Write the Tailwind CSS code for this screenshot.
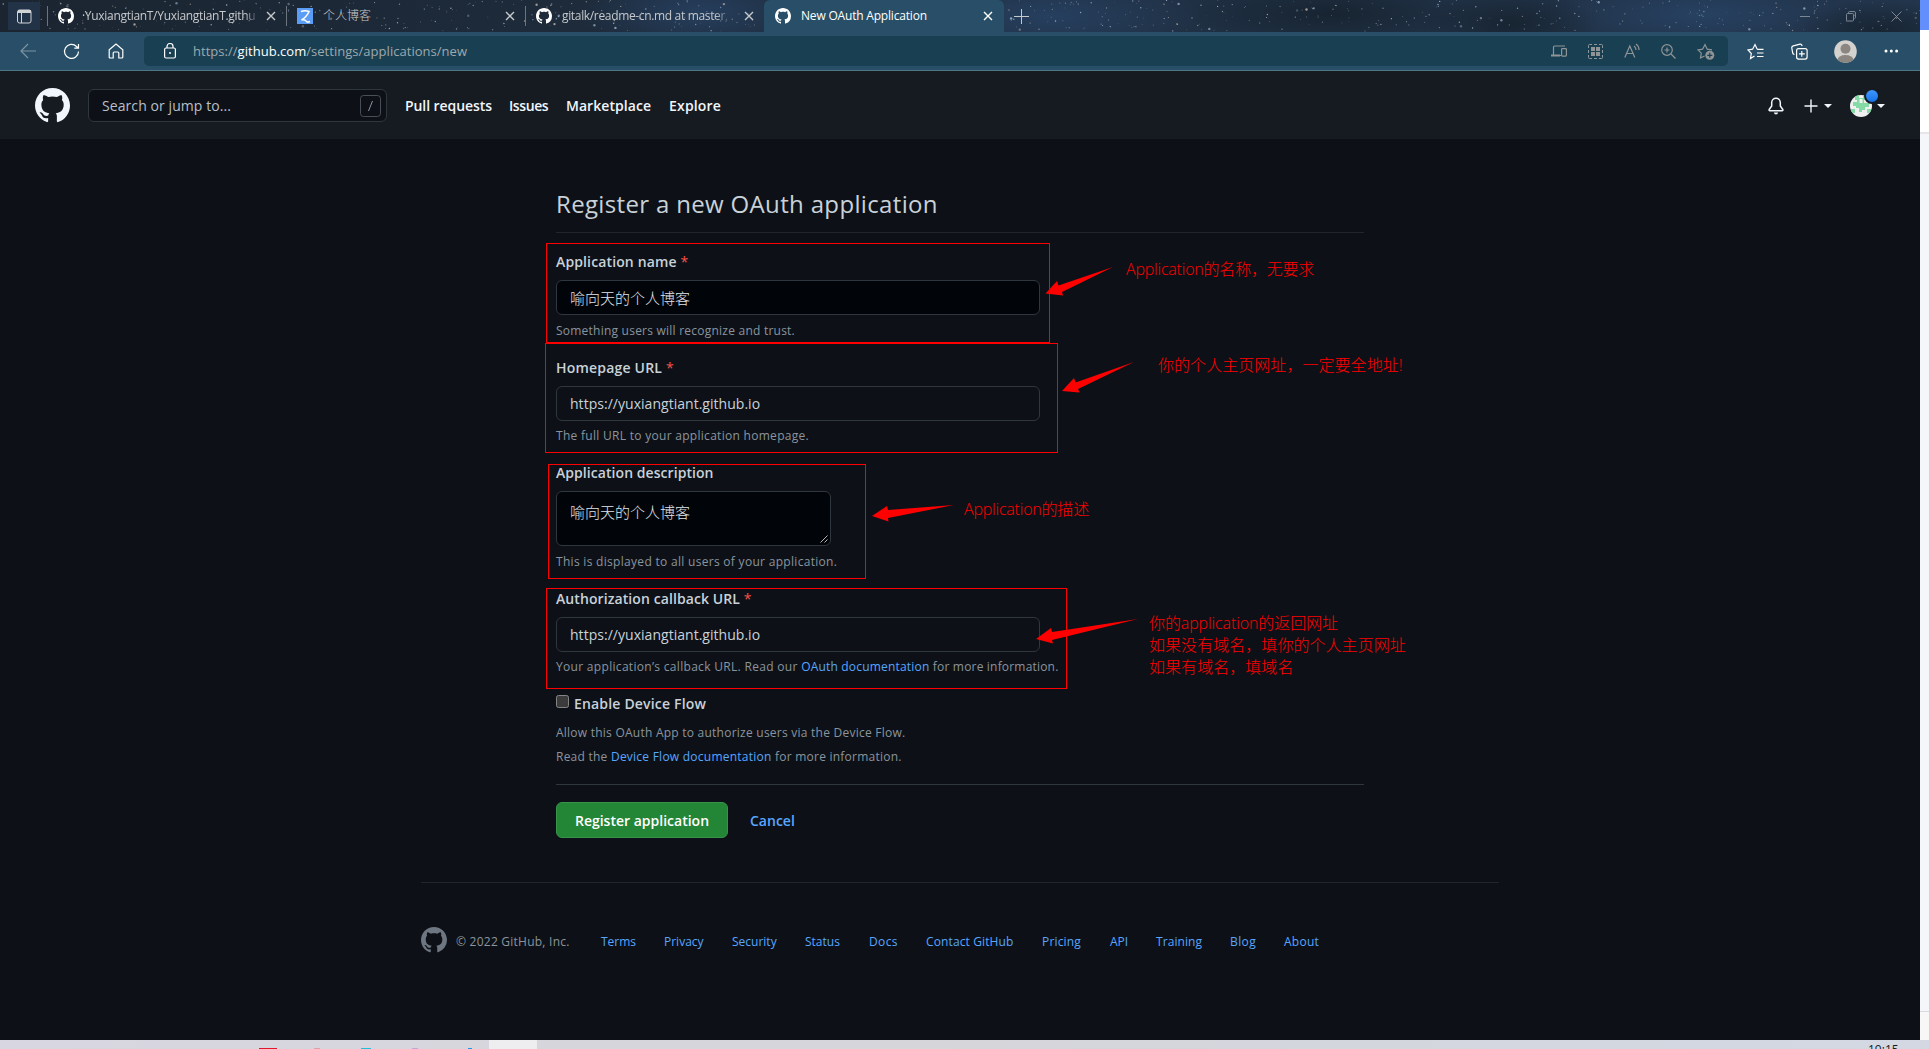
<!DOCTYPE html>
<html lang="en">
<head>
<meta charset="utf-8">
<title>New OAuth Application</title>
<script src="https://cdn.jsdelivr.net/npm/@tailwindcss/browser@4"></script>
</head>
<body class="w-[1929px] h-[1049px] overflow-hidden bg-white font-['Open_Sans','Noto_Sans_CJK_SC',sans-serif] text-[14px] text-[#c9d1d9]">
<svg class="hidden">
  <symbol id="mark" viewBox="0 0 16 16"><path fill="currentColor" d="M8 0C3.58 0 0 3.58 0 8c0 3.54 2.29 6.53 5.47 7.59.4.07.55-.17.55-.38 0-.19-.01-.82-.01-1.49-2.01.37-2.53-.49-2.69-.94-.09-.23-.48-.94-.82-1.13-.28-.15-.68-.52-.01-.53.63-.01 1.08.58 1.23.82.72 1.21 1.87.87 2.33.66.07-.52.28-.87.51-1.07-1.78-.2-3.64-.89-3.64-3.95 0-.87.31-1.59.82-2.15-.08-.2-.36-1.02.08-2.12 0 0 .67-.21 2.2.82.64-.18 1.32-.27 2-.27s1.36.09 2 .27c1.53-1.04 2.2-.82 2.2-.82.44 1.1.16 1.92.08 2.12.51.56.82 1.27.82 2.15 0 3.07-1.87 3.75-3.65 3.95.29.25.54.73.54 1.48 0 1.07-.01 1.93-.01 2.2 0 .21.15.46.55.38A8.01 8.01 0 0 0 16 8c0-4.42-3.58-8-8-8z"/></symbol>
  <symbol id="x" viewBox="0 0 10 10"><path d="M1 1l8 8M9 1l-8 8" stroke="currentColor" stroke-width="1.4" fill="none"/></symbol>
</svg>
<div class="relative flex h-[1049px] w-[1929px] flex-col">
 <div class="flex h-[1040px]">
  <div class="flex w-[1920px] flex-col bg-[#0d1117]">

   <!-- tab strip -->
   <div class="relative h-8 bg-linear-to-r from-[#1b2531] via-[#1f2f42] to-[#22354c]">
    <svg id="sky" class="absolute inset-0" width="1920" height="32">
     <defs>
      <radialGradient id="neb"><stop offset="0" stop-color="#2b4a72" stop-opacity=".6"/><stop offset="1" stop-color="#2b4a72" stop-opacity="0"/></radialGradient>
      <radialGradient id="dk"><stop offset="0" stop-color="#15202b" stop-opacity=".8"/><stop offset="1" stop-color="#15202b" stop-opacity="0"/></radialGradient>
     </defs>
     <ellipse cx="700" cy="12" rx="120" ry="40" fill="url(#neb)"/><ellipse cx="1050" cy="16" rx="150" ry="40" fill="url(#neb)"/><ellipse cx="1700" cy="14" rx="150" ry="34" fill="url(#neb)"/><ellipse cx="1330" cy="14" rx="150" ry="34" fill="url(#dk)"/><ellipse cx="1510" cy="24" rx="90" ry="34" fill="url(#dk)"/><ellipse cx="1880" cy="30" rx="90" ry="30" fill="url(#dk)"/>
     <g id="stars"></g>
    </svg>
    <div class="relative flex h-8 items-center text-[12px] text-[#c6c9cc]">
     <div class="ml-2 flex h-7 w-8 items-center justify-center bg-[#223247]">
      <svg width="15" height="15" viewBox="0 0 15 15" fill="none" stroke="#d0d3d6"><rect x=".5" y="1" width="13.5" height="13" rx="2"/><path d="M1 2.5h13" stroke-width="3"/><path d="M4.5 4v10"/></svg>
     </div>
     <div class="ml-[7px] h-5 w-px bg-[#6b7580]"></div>
     <svg class="ml-[10px] size-4 text-white"><use href="#mark"/></svg>
     <div class="ml-2 w-[177px] overflow-hidden whitespace-nowrap tracking-[-0.3px] mask-r-from-92%">·YuxiangtianT/YuxiangtianT.githu</div>
     <svg class="ml-[7px] size-[10px]"><use href="#x"/></svg>
     <div class="ml-[10px] h-5 w-px bg-[#6b7580]"></div>
     <svg class="ml-[10px] size-4" viewBox="0 0 16 16" fill="none"><path fill="#5b9df5" d="M0 0h16v16H0z"/><path d="M4 3.500q4-1.500 8 0q-2 5-7.500 8.500q3.500-1 4.500 1t4 .5" stroke="#fff" stroke-width="1.500"/></svg>
     <div class="ml-[10px] w-[182px] text-[12px] font-light">个人博客</div>
     <svg class="ml-0 size-[10px]"><use href="#x"/></svg>
     <div class="ml-[10px] h-5 w-px bg-[#6b7580]"></div>
     <svg class="ml-[10px] size-4 text-white"><use href="#mark"/></svg>
     <div class="ml-[10px] w-[170px] overflow-hidden whitespace-nowrap tracking-[-0.34px] mask-r-from-90%">gitalk/readme-cn.md at master,</div>
     <svg class="ml-[12px] size-[10px]"><use href="#x"/></svg>
     <div class="ml-[10px] flex h-8 w-[240px] items-center rounded-t-[6px] bg-[#284f67] pl-[11px] text-white">
      <svg class="size-4 text-white"><use href="#mark"/></svg>
      <div class="ml-[10px] w-[182px] whitespace-nowrap tracking-[-0.19px]">New OAuth Application</div>
      <svg class="size-[10px]"><use href="#x"/></svg>
     </div>
     <svg class="ml-[10px]" width="15" height="15" viewBox="0 0 15 15" stroke="#c6c9cc"><path d="M0 7.500h15M7.500 0v15"/></svg>
     <div class="ml-auto flex w-[120px] items-center justify-between pr-[18px] text-[#7b8794]">
      <svg width="10" height="10" stroke="currentColor"><path d="M0 5.500h10"/></svg>
      <svg width="10" height="11" fill="none" stroke="currentColor"><rect x=".5" y="2.500" width="7" height="7.500" rx="1"/><path d="M2.500 2V1.500q0-1 1-1h4.500q1.500 0 1.500 1.500v4.500q0 1-1 1"/></svg>
      <svg width="11" height="11" stroke="currentColor"><path d="M.5.5l10 10M10.500.5l-10 10"/></svg>
     </div>
    </div>
   </div>

   <!-- toolbar -->
   <div class="flex h-[39px] items-center border-b border-[#4d7784] bg-[#284f67] text-white">
    <svg class="ml-5 text-[#7d94a2]" width="16" height="16" viewBox="0 0 16 16" fill="none" stroke="currentColor" stroke-width="1.200"><path d="M16 8H1M8 1L1 8l7 7"/></svg>
    <svg class="ml-[27px]" width="17" height="17" viewBox="0 0 17 17" fill="none" stroke="currentColor" stroke-width="1.200"><path d="M15.500 8.500a7 7 0 1 1-2-5L15.500 5M15.500 1v4.200h-4.200"/></svg>
    <svg class="ml-7" width="16" height="16" viewBox="0 0 16 16" fill="none" stroke="currentColor" stroke-width="1.200"><path d="M1.200 6.800L8 1l6.800 5.800v7.200q0 1-1 1h-3V10q0-1-1-1H6.200q-1 0-1 1v5h-3q-1 0-1-1z"/></svg>
    <div class="ml-5 flex h-[30px] w-[1584px] items-center rounded-[5px] bg-[#193f53] pl-5 pr-[13px]">
     <svg width="12" height="16" viewBox="0 0 12 16" fill="none" stroke="currentColor" stroke-width="1.200"><rect x=".6" y="5" width="10.800" height="10" rx="1.500"/><path d="M3 5V3.500a3 3 0 0 1 6 0V5"/><circle cx="6" cy="10" r="1" fill="currentColor" stroke="none"/></svg>
     <div class="ml-[17px] whitespace-nowrap pt-px text-[13px] tracking-[0.03px] text-[#9fa9ac]">https://<span class="text-white">github.com</span>/settings/applications/new</div>
     <div class="ml-auto flex items-center gap-[21px] text-[#8f9496]">
      <svg width="16" height="16" viewBox="0 0 16 16" fill="none" stroke="currentColor" stroke-width="1.200"><path d="M2.500 12V4q0-1 1-1H14M0 12.500h10" /><path d="M0 12.500h9" stroke-width="2"/><rect x="10.600" y="5.600" width="4.800" height="7.500" rx=".8"/></svg>
      <svg width="15" height="15" viewBox="0 0 15 15" fill="none" stroke="currentColor"><path d="M.5 4V1.500q0-1 1-1H4M6 .5h3M6 14.500h3M.5 6v3M14.500 6v3M11 .5h2.500q1 0 1 1V4M14.500 11v2.500q0 1-1 1H11M4 14.500H1.500q-1 0-1-1V11"/><path d="M3 3h4v4H3zM8 3h4v4H8zM3 8h4v4H3zM8 8h4v4H8z" fill="currentColor" stroke="none"/></svg>
      <svg width="16" height="16" viewBox="0 0 16 16" fill="none" stroke="currentColor" stroke-width="1.200"><path d="M.8 14.500L5.800 3l5 11.500M2.500 10.500h6.600M10 3q2 1.500 2 4M12 1q3 2 3 6"/></svg>
      <svg width="15" height="15" viewBox="0 0 15 15" fill="none" stroke="currentColor" stroke-width="1.200"><circle cx="6" cy="6" r="5.300"/><path d="M10 10l4.500 4.500M3.500 6h5M6 3.500v5"/></svg>
      <svg width="18" height="17" viewBox="0 0 18 17" fill="none" stroke="currentColor" stroke-width="1.200"><path d="M7.500 13L3.500 15l.8-4.800L1 6.900l4.600-.7L8 1.500l2.200 4.700 4.800.7"/><circle cx="12.800" cy="12.300" r="4.500" fill="currentColor" stroke="none"/><path d="M12.800 9.800v5M10.300 12.300h5" stroke="#193f53"/></svg>
     </div>
    </div>
    <svg class="ml-[19px]" width="17" height="17" viewBox="0 0 17 17" fill="none" stroke="currentColor" stroke-width="1.200"><path d="M7.500 13L3.500 15.500l.8-5L1 6.900l4.600-.7L8 1.500l2.200 4.700M10.200 6.300h6.300M10 10h6.500M10 13.500h6.500"/></svg>
    <svg class="ml-[27px]" width="17" height="17" viewBox="0 0 17 17" fill="none" stroke="currentColor" stroke-width="1.200"><rect x="5.600" y="5.600" width="10.500" height="10.500" rx="2"/><path d="M10.800 8v5.800M8 10.800h5.800M3.500 11.500q-1.500-.4-1.800-1.500L.8 5Q.6 3.200 2.300 2.800L9 1.200q1.500-.3 2.200 1.800"/></svg>
    <svg class="ml-[26px]" width="23" height="23" viewBox="0 0 23 23"><clipPath id="c"><circle cx="11.500" cy="11.500" r="11.300"/></clipPath><g clip-path="url(#c)"><path fill="#d4d2ce" d="M0 0h23v23H0z"/><circle cx="11.500" cy="8.700" r="5" fill="#8b8680"/><ellipse cx="11.500" cy="20" rx="8" ry="5" fill="#8b8680"/></g></svg>
    <svg class="ml-[27px]" width="15" height="4" fill="currentColor"><circle cx="2" cy="2" r="1.500"/><circle cx="7.300" cy="2" r="1.500"/><circle cx="12.600" cy="2" r="1.500"/></svg>
   </div>

   <!-- site header -->
   <div class="flex h-[68px] items-center bg-[#161b22] pl-[35px] pt-[1px] font-semibold text-[#f0f6fc]">
    <svg class="size-[35px]"><use href="#mark"/></svg>
    <div class="ml-[18px] flex h-[33px] w-[299px] items-center justify-between rounded-md border border-[#30363d] bg-[#0d1117] pl-[13px] pr-[5px] font-normal text-[#b9bfc6]"><span class="tracking-[0.08px]">Search or jump to...</span>
     <svg width="21" height="22" fill="none"><rect x=".5" y=".5" width="20" height="21" rx="3" stroke="#484f58"/><path d="M12.500 6L8.500 16" stroke="#8b949e"/></svg></div>
    <div class="ml-[18px] flex whitespace-nowrap"><span class="w-[104px] tracking-[-0.07px]">Pull requests</span><span class="w-[57px] tracking-[-0.4px]">Issues</span><span class="w-[103px] tracking-[0.05px]">Marketplace</span><span class="tracking-[0.18px]">Explore</span></div>
    <div class="ml-auto flex items-center pr-[35px]">
     <svg width="16" height="18" viewBox="0 0 16 18" fill="none" stroke="currentColor" stroke-width="1.500"><path d="M8 1.200A4.300 4.300 0 0 0 3.700 5.500V9L1.200 12.500q-.5 1 .5 1.200h12.600q1-.2.5-1.200L12.300 9V5.500A4.300 4.300 0 0 0 8 1.200z"/><path d="M5.800 15.500h4.400q-.5 2-2.200 2t-2.200-2z" fill="currentColor" stroke="none"/></svg>
     <svg class="ml-5" width="14" height="14" stroke="currentColor" stroke-width="1.400"><path d="M0.500 7h13M7 .5v13"/></svg>
     <svg class="ml-[6px]" width="8" height="4" fill="currentColor"><path d="M0 0h8L4 4z"/></svg>
     <div class="relative ml-[18px]">
      <svg width="22" height="22" viewBox="0 0 22 22"><clipPath id="a"><circle cx="11" cy="11" r="11"/></clipPath><g clip-path="url(#a)"><path fill="#f0f0f0" d="M0 0h22v22H0z"/><path fill="#84dba5" d="M5 0h4v3h4V0h4v5h-3v3h5v4h-4v3h-3v2H9v-4H6v-2H3V7h4V5H5zM1 14h4v4H1zM17 14h4v4h-4z"/><path fill="#f0f0f0" d="M9.500 4v4h3V4z"/></g></svg>
      <div class="absolute -top-[7px] left-[14px] size-[16px] rounded-full border-2 border-[#161b22] bg-linear-to-b from-[#3f96ff] to-[#1273ea]"></div>
     </div>
     <svg class="ml-[5px]" width="8" height="4" fill="currentColor"><path d="M0 0h8L4 4z"/></svg>
    </div>
   </div>

   <!-- registration form -->
   <main class="ml-[556px] w-[808px] pt-[47px]">
    <h1 class="border-b border-[#21262d] pb-[10px] text-[24px] leading-9 tracking-[0.34px]">Register a new OAuth application</h1>
    <div class="mt-[19px]">
     <div class="font-semibold leading-5 tracking-[0.13px]">Application name <span class="font-normal text-[#f85149]">*</span></div>
     <div class="mt-2 flex h-[35px] w-[484px] items-center rounded-md border border-[#30363d] bg-[#010409] px-[13px] pt-px text-[15px] font-light text-[#e0e6ec]">喻向天的个人博客</div>
     <p class="mt-[7px] text-[12px] leading-[18px] tracking-[0.23px] text-[#8b949e]">Something users will recognize and trust.</p>
    </div>
    <div class="mt-[18px]">
     <div class="font-semibold leading-5 tracking-[0.2px]">Homepage URL <span class="font-normal text-[#f85149]">*</span></div>
     <div class="mt-2 flex h-[35px] w-[484px] items-center rounded-md border border-[#30363d] px-[13px] tracking-[0.03px]">https://yuxiangtiant.github.io</div>
     <p class="mt-[6px] text-[12px] leading-[18px] tracking-[0.29px] text-[#8b949e]">The full URL to your application homepage.</p>
    </div>
    <div class="mt-[18px]">
     <div class="font-semibold leading-5 tracking-[0.06px]">Application description</div>
     <div class="relative mt-2 h-[55px] w-[275px] rounded-md border border-[#30363d] bg-[#010409] px-[13px] pt-[9px] text-[15px] font-light leading-[22px] text-[#e0e6ec]">喻向天的个人博客
      <svg class="absolute bottom-[2px] right-[2px]" width="8" height="8" stroke="#b5b5b5"><path d="M0.500 7.500l7-7M4.500 7.500l3-3"/></svg></div>
     <p class="mt-[7px] text-[12px] leading-[18px] tracking-[0.3px] text-[#8b949e]">This is displayed to all users of your application.</p>
    </div>
    <div class="mt-[18px]">
     <div class="font-semibold leading-5 tracking-[0.09px]">Authorization callback URL <span class="font-normal text-[#f85149]">*</span></div>
     <div class="mt-2 flex h-[35px] w-[484px] items-center rounded-md border border-[#30363d] px-[13px] tracking-[0.03px]">https://yuxiangtiant.github.io</div>
     <p class="mt-[6px] text-[12px] leading-[18px] tracking-[0.19px] text-[#8b949e]"><span class="tracking-[0.31px]">Your application’s callback URL. Read our </span><span class="text-[#58a6ff]">OAuth documentation</span> for more information.</p>
    </div>
    <div class="mt-[18px] flex h-5">
     <div class="mt-[1px] size-[13px] rounded-[2.5px] border border-[#858585] bg-[#3b3b3b]"></div>
     <div class="ml-[5px] font-semibold leading-5 tracking-[0.18px]">Enable Device Flow</div>
    </div>
    <div class="mt-[7px] text-[12px] leading-6 tracking-[0.24px] text-[#8b949e]">
     <p>Allow this OAuth App to authorize users via the Device Flow.</p>
     <p>Read the <span class="text-[#58a6ff]">Device Flow documentation</span> for more information.</p>
    </div>
    <div class="mt-[15px] h-px bg-[#30363d]"></div>
    <div class="mt-[17px] flex h-9 items-center font-semibold">
     <div class="flex h-9 w-[172px] items-center justify-center rounded-md border border-[#389349] bg-[#238636] text-white">Register application</div>
     <span class="ml-[22px] text-[#58a6ff]">Cancel</span>
    </div>
   </main>

   <footer class="ml-[421px] mt-[44px] w-[1078px] border-t border-[#21262d] pt-[44px] text-[12px]">
    <div class="flex h-[26px] items-center whitespace-nowrap text-[#58a6ff]">
     <svg class="size-[26px] text-[#6e7681]"><use href="#mark"/></svg>
     <div class="flex pt-[3px]">
     <span class="ml-[9px] w-[145px] tracking-[0.24px] text-[#8b949e]">© 2022 GitHub, Inc.</span>
     <span class="w-[63px]">Terms</span><span class="w-[68px]">Privacy</span><span class="w-[73px]">Security</span><span class="w-[64px]">Status</span><span class="w-[57px] tracking-[0.4px]">Docs</span><span class="w-[116px] tracking-[0.12px]">Contact GitHub</span><span class="w-[68px] tracking-[0.18px]">Pricing</span><span class="w-[46px]">API</span><span class="w-[74px] tracking-[0.07px]">Training</span><span class="w-[54px] tracking-[0.4px]">Blog</span><span class="tracking-[0.27px]">About</span>
     </div>
    </div>
   </footer>
  </div>

  <!-- window behind the browser -->
  <div class="flex w-[9px] flex-col">
   <div class="h-[30px] bg-[#628ffb]"></div>
   <div class="h-[102px] bg-white"></div>
   <div class="h-[879px] border-t-2 border-[#e6e6e6] bg-[#f5f6fa]"></div>
   <div class="h-[29px] border-t border-[#d8dade] bg-[#f7f7f8]"></div>
  </div>
 </div>

 <!-- taskbar sliver -->
 <div class="relative h-[9px] overflow-hidden bg-linear-to-r from-[#d8d6e0] via-[#d5d5da] to-[#d3d8e3]">
  <svg class="absolute left-0 top-0" width="1929" height="9"><path fill="#eeeef0" d="M489 0h48v9h-48z"/><path fill="#e0182c" d="M259 8h18v1h-18z"/><path fill="#e0a0a8" d="M314 8h6v1h-6z"/><path fill="#25bfd8" d="M361 8h10v1h-10z"/><path fill="#c9a5d6" d="M412 8h6v1h-6z"/><path fill="#1e9be0" d="M468 8h4v1h-4z"/></svg>
  <div class="absolute left-[1868px] top-[2px] text-[12px] leading-4 text-[#1a1a1a]">19:15</div>
 </div>

 <!-- annotations laid over the page -->
 <div class="absolute left-[546px] top-[243px] h-[100px] w-[504px] border border-[#f00]"></div>
 <div class="absolute left-[545px] top-[343px] h-[110px] w-[513px] border border-[#f00]"></div>
 <div class="absolute left-[548px] top-[464px] h-[115px] w-[318px] border border-[#f00]"></div>
 <div class="absolute left-[546px] top-[588px] h-[101px] w-[521px] border border-[#f00]"></div>
 <svg class="absolute left-0 top-0" width="1929" height="1049" fill="#f00">
  <path d="M1045.500 293.500L1057 281l1.500 4.500L1113 267l-51 25 1 3.500z"/>
  <path d="M1062 391L1074 378l1.500 4.500L1134 362l-56 27 1.500 3.500z"/>
  <path d="M872 516L887 506l1 4L954 505l-66 13 .5 3.500z"/>
  <path d="M1036 639L1051 628l1 4L1138 619l-86 21 1 3.500z"/>
 </svg>
 <div class="absolute left-[1126px] top-[258px] whitespace-nowrap text-[16px] font-light leading-[22px] tracking-[-0.2px] text-[#f00]">Application的名称，无要求</div>
 <div class="absolute left-[1158px] top-[354px] whitespace-nowrap text-[16px] font-light leading-[22px] tracking-[0.05px] text-[#f00]">你的个人主页网址，一定要全地址!</div>
 <div class="absolute left-[964px] top-[498px] whitespace-nowrap text-[16px] font-light leading-[22px] tracking-[-0.2px] text-[#f00]">Application的描述</div>
 <div class="absolute left-[1149px] top-[612px] whitespace-nowrap text-[16px] font-light leading-[22px] tracking-[0.05px] text-[#f00]"><span class="tracking-[-0.1px]">你的application的返回网址</span><br>如果没有域名，填你的个人主页网址<br>如果有域名，填域名</div>
</div>
<script>
// scatter a fixed star field over the tab strip
let seed = 11;
const rnd = () => (seed = (seed * 16807) % 2147483647) / 2147483647;
let out = '';
for (let i = 0; i < 620; i++) {
  const r = rnd() > 0.95 ? 1.2 : 0.35 + rnd() * 0.4;
  out += `<circle cx="${(rnd() * 1920).toFixed(1)}" cy="${(rnd() * 31).toFixed(1)}" r="${r.toFixed(2)}" fill="${rnd() > 0.7 ? '#c9b8b0' : '#b4cbe4'}" opacity="${(0.25 + rnd() * 0.6).toFixed(2)}"/>`;
}
document.getElementById('stars').innerHTML = out;
</script>
</body>
</html>
